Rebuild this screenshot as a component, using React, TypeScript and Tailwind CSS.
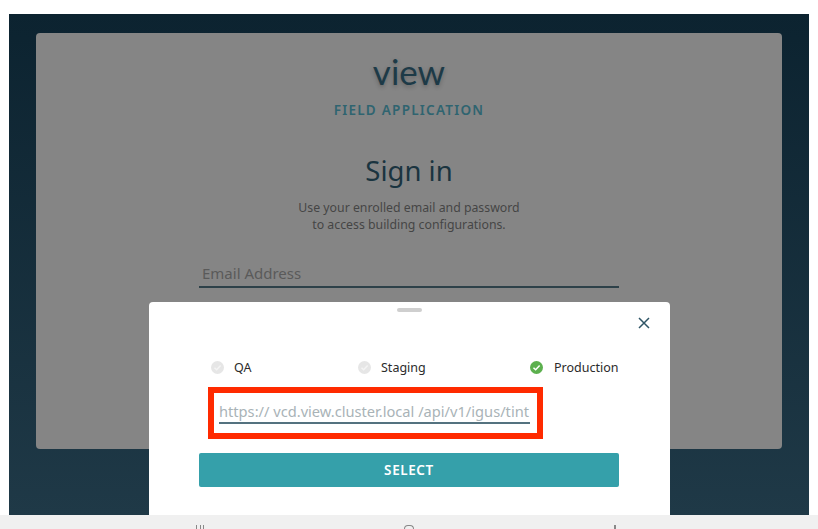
import React from "react";

function Radio({ on, label, className }: { on?: boolean; label: string; className: string }) {
  return (
    <div className={`flex items-center ${className}`}>
      <span className={`flex h-[13px] w-[13px] items-center justify-center rounded-full ${on ? "bg-[#5cb04e]" : "bg-[#e6e6e6]"}`}>
        <svg viewBox="0 0 12 12" className="h-[13px] w-[13px]" fill="none" stroke={on ? "#ffffff" : "#f4f4f4"} strokeWidth="1.4">
          <path d="M3.2 6.2 5.2 8.1 8.9 4.2" />
        </svg>
      </span>
      <span className={`${on ? "ml-[11px]" : "ml-[10px]"} pt-[2px] text-[12.5px] leading-[16px] text-[#2b2b2b]`}>{label}</span>
    </div>
  );
}

export default function App() {
  return (
    <div className="relative h-[529px] w-[818px] overflow-hidden bg-white font-['Noto_Sans',sans-serif]">
      <div className="ml-[9px] mt-[14px] h-[501px] w-[800px] bg-gradient-to-b from-[#0c2330] to-[#1f3947] px-[27px] pt-[19px]">
        <div className="flex h-[416px] w-[746px] flex-col items-center rounded-[4px] bg-[#858585] pt-[18px]">
          <div className="font-['Lato',sans-serif] text-[35px] leading-[40px] text-[#1d3a47] [text-shadow:0_2px_4px_rgba(0,0,0,0.25)]">view</div>
          <div className="mt-[11px] text-[13.5px] font-semibold leading-[16px] tracking-[1.25px] text-[#2f6470]">FIELD APPLICATION</div>
          <div className="mt-[34px] text-[27.5px] leading-[38px] text-[#1a3440]">Sign in</div>
          <div className="mt-[9px] text-center text-[12.3px] leading-[17px] text-[#454545]">
            Use your enrolled email and password
            <br />
            to access building configurations.
          </div>
          <div className="mt-[31px] h-[24px] w-[420px] border-b-2 border-[#2d4149] pl-[3px] text-[15px] leading-[18px] text-[#5a5a5a]">Email Address</div>
        </div>
      </div>

      <div className="flex h-[14px] w-[818px] justify-center gap-[200px] bg-[#f0f0f0] pr-[6px]">
        <div className="mt-[10px] flex h-[4px] w-[8px] justify-between">
          <span className="w-px bg-[#888888]" />
          <span className="w-px bg-[#888888]" />
          <span className="w-px bg-[#888888]" />
        </div>
        <div className="mt-[10px] h-[4px] w-[10px] rounded-t-full border-x border-t border-[#888888]" />
        <div className="mt-[10px] h-[4px] w-[2px] bg-[#888888]" />
      </div>

      <div className="absolute left-[149px] top-[302px] flex h-[213px] w-[521px] flex-col rounded-t-[4px] bg-white">
        <div className="mx-auto mt-[6px] h-[4px] w-[25px] rounded-full bg-[#cfcfcf]" />
        <svg viewBox="0 0 12 12" className="absolute right-[20px] top-[15px] h-[12px] w-[12px]" fill="none" stroke="#2f5566" strokeWidth="1.5">
          <path d="M1 1 11 11M11 1 1 11" />
        </svg>
        <div className="mt-[47px] flex h-[16px] pl-[62px]">
          <Radio label="QA" className="w-[147px]" />
          <Radio label="Staging" className="w-[172px]" />
          <Radio on label="Production" className="" />
        </div>
        <div className="ml-[59px] mt-[12px] h-[52px] w-[335px] border-[6px] border-[#ff2a00] pl-[5px] pr-[7px] pt-[7px]">
          <div className="h-[24px] whitespace-nowrap border-b-2 border-[#54727f] text-[14.65px] leading-[22px] text-[#a9b3b7]">https:// vcd.view.cluster.local /api/v1/igus/tint</div>
        </div>
        <div className="ml-[50px] mt-[14px] flex h-[34px] w-[420px] items-center justify-center rounded-[2px] bg-[#35a0aa] text-[13.5px] font-semibold tracking-[0.6px] text-white">SELECT</div>
      </div>
    </div>
  );
}
